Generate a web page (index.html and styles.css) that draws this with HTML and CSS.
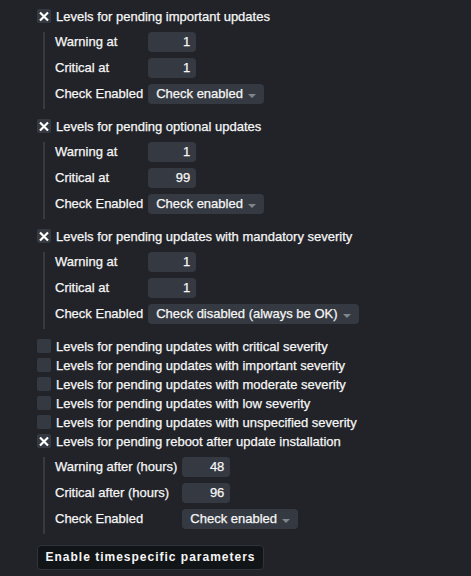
FILE: index.html
```html
<!DOCTYPE html>
<html>
<head>
<meta charset="utf-8">
<link rel="stylesheet" href="styles.css">
</head>
<body>
<div class="page">
  <div class="section">
    <div class="cb-row"><span class="cb"><svg viewBox="0 0 14 14" width="14" height="14"><path d="M3 3.5 L11 11.5 M11 3.5 L3 11.5" class="x"/></svg></span><span class="cb-text">Levels for pending important updates</span></div>
    <div class="group">
      <span class="lbl">Warning at</span><span class="num">1</span>
      <span class="lbl">Critical at</span><span class="num">1</span>
      <span class="lbl">Check Enabled</span><span class="sel">Check enabled<i class="arrow"></i></span>
    </div>
  </div>
  <div class="section">
    <div class="cb-row"><span class="cb"><svg viewBox="0 0 14 14" width="14" height="14"><path d="M3 3.5 L11 11.5 M11 3.5 L3 11.5" class="x"/></svg></span><span class="cb-text">Levels for pending optional updates</span></div>
    <div class="group">
      <span class="lbl">Warning at</span><span class="num">1</span>
      <span class="lbl">Critical at</span><span class="num">99</span>
      <span class="lbl">Check Enabled</span><span class="sel">Check enabled<i class="arrow"></i></span>
    </div>
  </div>
  <div class="section">
    <div class="cb-row"><span class="cb"><svg viewBox="0 0 14 14" width="14" height="14"><path d="M3 3.5 L11 11.5 M11 3.5 L3 11.5" class="x"/></svg></span><span class="cb-text">Levels for pending updates with mandatory severity</span></div>
    <div class="group">
      <span class="lbl">Warning at</span><span class="num">1</span>
      <span class="lbl">Critical at</span><span class="num">1</span>
      <span class="lbl">Check Enabled</span><span class="sel">Check disabled (always be OK)<i class="arrow"></i></span>
    </div>
  </div>
  <div class="cb-row plain"><span class="cb"></span><span class="cb-text">Levels for pending updates with critical severity</span></div>
  <div class="cb-row plain"><span class="cb"></span><span class="cb-text">Levels for pending updates with important severity</span></div>
  <div class="cb-row plain"><span class="cb"></span><span class="cb-text">Levels for pending updates with moderate severity</span></div>
  <div class="cb-row plain"><span class="cb"></span><span class="cb-text">Levels for pending updates with low severity</span></div>
  <div class="cb-row plain"><span class="cb"></span><span class="cb-text">Levels for pending updates with unspecified severity</span></div>
  <div class="section">
    <div class="cb-row"><span class="cb"><svg viewBox="0 0 14 14" width="14" height="14"><path d="M3 3.5 L11 11.5 M11 3.5 L3 11.5" class="x"/></svg></span><span class="cb-text">Levels for pending reboot after update installation</span></div>
    <div class="group">
      <span class="lbl">Warning after (hours)</span><span class="num">48</span>
      <span class="lbl">Critical after (hours)</span><span class="num">96</span>
      <span class="lbl">Check Enabled</span><span class="sel">Check enabled<i class="arrow"></i></span>
    </div>
  </div>
  <div class="btn">Enable timespecific parameters</div>
</div>
</body>
</html>
```
FILE: styles.css
```css
html, body {
  margin: 0;
  padding: 0;
  background: #212328;
}
body {
  width: 471px;
  height: 576px;
  overflow: hidden;
  font-family: "Liberation Sans", Arial, sans-serif;
  font-size: 13px;
  font-weight: normal;
  color: #f6f6f6;
  -webkit-text-stroke: 0.25px #f6f6f6;
}
.page {
  padding: 9px 0 0 37px;
}
.section {
  margin-bottom: 10px;
}
.cb-row {
  display: flex;
  align-items: center;
  height: 14px;
  gap: 5px;
}
.cb-row.plain {
  margin-bottom: 5px;
}
.cb {
  width: 14px;
  height: 14px;
  background: #353a42;
  border-radius: 2px;
  flex: none;
  display: block;
}
.cb svg {
  display: block;
}
.x {
  stroke: #ffffff;
  stroke-width: 2.2;
  fill: none;
}
.group {
  margin: 9px 0 0 6px;
  border-left: 2px solid #363a42;
  padding: 0 0 5px 10px;
  display: grid;
  grid-template-columns: max-content max-content;
  column-gap: 5px;
  row-gap: 6px;
  align-items: center;
}
.lbl {
  line-height: 20px;
}
.num {
  width: 48px;
  height: 20px;
  box-sizing: border-box;
  background: #353a42;
  border-radius: 4px;
  text-align: right;
  padding-right: 6px;
  line-height: 20px;
}
.sel {
  justify-self: start;
  height: 20px;
  box-sizing: border-box;
  background: #353a42;
  border-radius: 4px;
  padding: 0 8px;
  display: inline-flex;
  align-items: center;
  gap: 5px;
  line-height: 20px;
}
.arrow {
  display: block;
  width: 0;
  height: 0;
  border-left: 4px solid transparent;
  border-right: 4px solid transparent;
  border-top: 4px solid #80858c;
  margin-top: 3px;
}
.btn {
  margin-top: 1px;
  display: inline-block;
  box-sizing: border-box;
  width: 227px;
  height: 25px;
  line-height: 23px;
  background: #121517;
  border: 1px solid #2f343a;
  border-radius: 4px;
  text-align: center;
  font-size: 12px;
  letter-spacing: 1px;
  font-weight: bold;
  -webkit-text-stroke: 0;
}
```
